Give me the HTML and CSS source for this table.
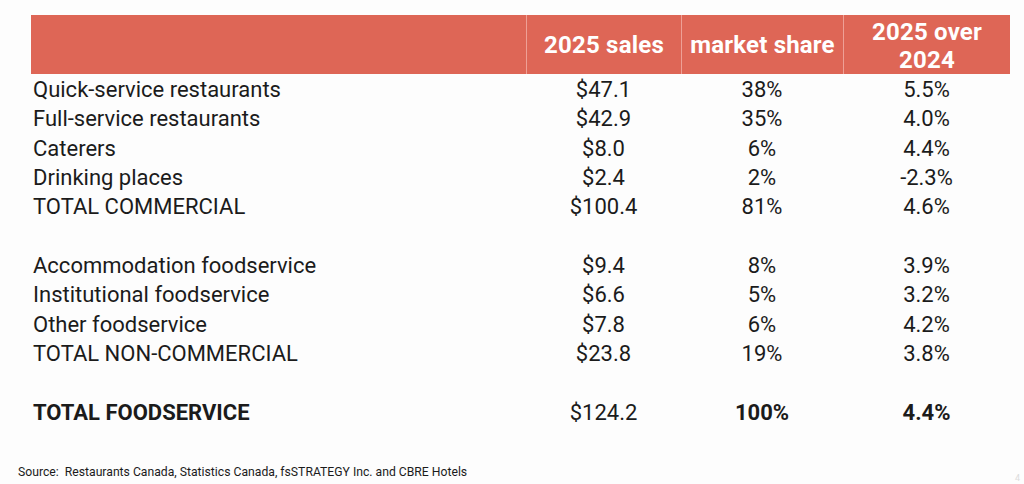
FILE: index.html
```html
<!DOCTYPE html>
<html>
<head>
<meta charset="utf-8">
<link rel="stylesheet" href="styles.css">
</head>
<body>
<div class="page">
  <div class="table">
    <div class="hd hd-first"></div>
    <div class="hd">2025 sales</div>
    <div class="hd">market share</div>
    <div class="hd hd-last">2025 over<br>2024</div>

    <div class="lbl">Quick-service restaurants</div><div class="num">$47.1</div><div class="num">38%</div><div class="num">5.5%</div>
    <div class="lbl">Full-service restaurants</div><div class="num">$42.9</div><div class="num">35%</div><div class="num">4.0%</div>
    <div class="lbl">Caterers</div><div class="num">$8.0</div><div class="num">6%</div><div class="num">4.4%</div>
    <div class="lbl">Drinking places</div><div class="num">$2.4</div><div class="num">2%</div><div class="num">-2.3%</div>
    <div class="lbl">TOTAL COMMERCIAL</div><div class="num">$100.4</div><div class="num">81%</div><div class="num">4.6%</div>
    <div class="gap"></div>
    <div class="lbl">Accommodation foodservice</div><div class="num">$9.4</div><div class="num">8%</div><div class="num">3.9%</div>
    <div class="lbl">Institutional foodservice</div><div class="num">$6.6</div><div class="num">5%</div><div class="num">3.2%</div>
    <div class="lbl">Other foodservice</div><div class="num">$7.8</div><div class="num">6%</div><div class="num">4.2%</div>
    <div class="lbl">TOTAL NON-COMMERCIAL</div><div class="num">$23.8</div><div class="num">19%</div><div class="num">3.8%</div>
    <div class="gap"></div>
    <div class="lbl bold">TOTAL FOODSERVICE</div><div class="num">$124.2</div><div class="num bold">100%</div><div class="num bold">4.4%</div>
  </div>
  <div class="source">Source:&nbsp; Restaurants Canada, Statistics Canada, fsSTRATEGY Inc. and CBRE Hotels</div>
  <div class="pagemark">4</div>
</div>
</body>
</html>
```

FILE: styles.css
```css
html, body {
  margin: 0;
  padding: 0;
  background: #fdfdfd;
}
.page {
  position: relative;
  width: 1024px;
  height: 484px;
  overflow: hidden;
  font-family: Roboto, "Liberation Sans", sans-serif;
  color: #1b1b1b;
}
.table {
  margin: 15px 0 0 31px;
  display: grid;
  grid-template-columns: 495px 155px 162px 167px;
  grid-template-rows: 59px;
  grid-auto-rows: 29.33px;
}
.hd {
  background: #de6656;
  color: #ffffff;
  font-weight: 700;
  font-size: 24px;
  line-height: 28px;
  letter-spacing: 0.2px;
  display: flex;
  align-items: center;
  justify-content: center;
  text-align: center;
  border-left: 1px solid #eea096;
}
.hd-first {
  border-left: none;
}
.hd-last {
  padding-top: 2px;
}
.lbl {
  font-size: 22px;
  padding-left: 2px;
  padding-top: 2px;
  display: flex;
  align-items: center;
  white-space: nowrap;
}
.num {
  font-size: 22px;
  padding-top: 2px;
  display: flex;
  align-items: center;
  justify-content: center;
}
.bold {
  font-weight: 700;
}
.gap {
  grid-column: 1 / -1;
}
.source {
  margin: 38px 0 0 18px;
  font-size: 12.2px;
  line-height: 16px;
  white-space: nowrap;
}
.pagemark {
  position: absolute;
  right: 4px;
  bottom: 1px;
  font-size: 9px;
  line-height: 10px;
  color: #dcdcdc;
}
```
